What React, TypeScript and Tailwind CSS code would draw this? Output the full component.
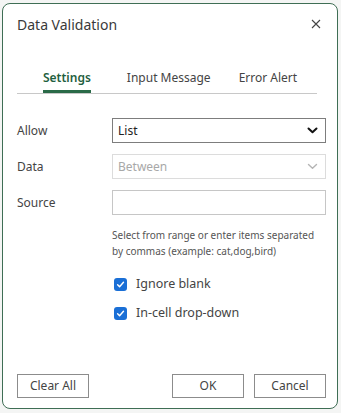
import React from "react";

const Check = () => (
  <span className="flex h-[13px] w-[13px] items-center justify-center rounded-[3px] bg-[#1a6fd6]">
    <svg width="9" height="9" viewBox="0 0 10 10" fill="none">
      <path d="M1.8 5.2 L4 7.4 L8.3 2.6" stroke="white" strokeWidth="1.6" strokeLinecap="round" strokeLinejoin="round" />
    </svg>
  </span>
);

const Chevron = ({ color, w }: { color: string; w: number }) => (
  <svg width="11" height="7" viewBox="0 0 11 7" fill="none">
    <path d="M1.5 1.5 L5.5 5.3 L9.5 1.5" stroke={color} strokeWidth={w} strokeLinecap="round" strokeLinejoin="round" />
  </svg>
);

export default function App() {
  return (
    <div
      className="h-[413px] w-[341px] bg-[#f4f5f4] pl-[2px] pt-[3px]"
      style={{ fontFamily: '"Segoe UI", "Noto Sans", "Open Sans", sans-serif' }}
    >
      <div className="flex h-[406px] w-[336px] flex-col rounded-[8px] border border-[#3f6e55] bg-white text-[#333]">
        <div className="flex h-[40px] items-center justify-between pl-[14px] pr-[16px]">
          <span className="text-[14px] text-[#3a3a3a]">Data Validation</span>
          <svg width="10" height="10" viewBox="0 0 10 10">
            <path d="M1 1 L9 9 M9 1 L1 9" stroke="#444" strokeWidth="1.1" />
          </svg>
        </div>

        <div className="ml-[14px] mr-[20px] mt-[23px] flex border-b border-[#c8c8c8] pl-[26px] text-[12px]">
          <div className="flex flex-col items-center">
            <span className="font-semibold text-[#1f5f3f] leading-[22px]">Settings</span>
            <span className="mt-[1px] h-[3px] w-full bg-[#2a6a48]" />
          </div>
          <span className="ml-[36px] leading-[22px] text-[#444]">Input Message</span>
          <span className="ml-[28px] leading-[22px] text-[#444]">Error Alert</span>
        </div>

        <div className="mt-[24px] flex flex-col gap-[11px] pl-[14px] pr-[11px] text-[12px]">
          <div className="flex items-center">
            <span className="w-[95px] text-[#444]">Allow</span>
            <div className="flex h-[25px] flex-1 items-center justify-between border border-[#7d7d7d] pl-[5px] pr-[7px]">
              <span className="text-[#222]">List</span>
              <Chevron color="#111" w={2} />
            </div>
          </div>
          <div className="flex items-center">
            <span className="w-[95px] text-[#444]">Data</span>
            <div className="flex h-[25px] flex-1 items-center justify-between border border-[#dcdcdc] pl-[5px] pr-[7px]">
              <span className="text-[#a8a8a8]">Between</span>
              <Chevron color="#b5b5b5" w={1.4} />
            </div>
          </div>
          <div className="flex items-center">
            <span className="w-[95px] text-[#444]">Source</span>
            <div className="h-[25px] flex-1 border border-[#c6c6c6]" />
          </div>
        </div>

        <div className="ml-[109px] mt-[12px] text-[10px] leading-[16px] text-[#555]">
          Select from range or enter items separated
          <br />
          by commas (example: cat,dog,bird)
        </div>

        <div className="ml-[111px] mt-[16px] flex flex-col gap-[11px] text-[12.5px] text-[#444]">
          <div className="flex h-[18px] items-center gap-[9px]">
            <Check />
            <span>Ignore blank</span>
          </div>
          <div className="flex h-[18px] items-center gap-[9px]">
            <Check />
            <span>In-cell drop-down</span>
          </div>
        </div>

        <div className="mt-auto mb-[10px] flex items-center pl-[14px] pr-[11px] text-[12px] text-[#444]">
          <button className="flex h-[24px] w-[72px] items-center justify-center border border-[#8c8c8c]">Clear All</button>
          <button className="ml-auto flex h-[24px] w-[72px] items-center justify-center border border-[#8c8c8c]">OK</button>
          <button className="ml-[10px] flex h-[24px] w-[72px] items-center justify-center border border-[#8c8c8c]">Cancel</button>
        </div>
      </div>
    </div>
  );
}
